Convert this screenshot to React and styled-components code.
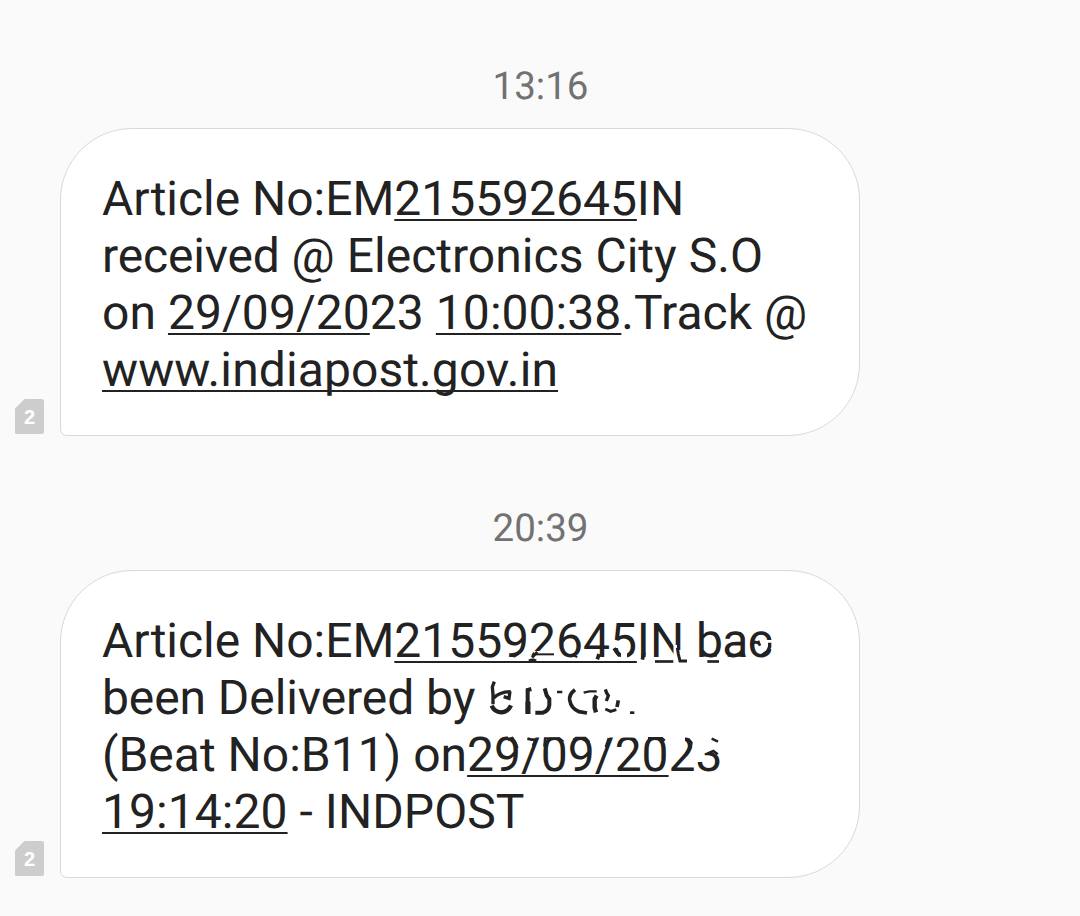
import styled, { createGlobalStyle } from "styled-components";

const GlobalStyle = createGlobalStyle`
  body {
    margin: 0;
    background: #fafafa;
  }
`;

// Sim card badge next to each incoming message
const Sim = () => (
  <SimCard>
    <svg width="29" height="35" viewBox="0 0 29 35">
      <path
        d="M9.5 0H26.5Q29 0 29 2.5V32.5Q29 35 26.5 35H1.5Q0 35 0 33.5V9.5Z"
        fill="#cdcdcd"
      />
    </svg>
    <span>2</span>
  </SimCard>
);

// Eraser strokes and what is left of the recipient name
const Smudge = () => (
  <SmudgeSvg width="300" height="150" viewBox="480 640 300 150">
    <g fill="#fff">
      <path d="M534 651h22v6h-22z" />
      <path d="M621 651h6v7h-6z" />
      <path d="M673.500 645h3.500v5h5v8h-8.500z" />
      <path d="M764 636h13v5.500h-13z" />
      <path d="M771.500 640h5v18h-5z" />
      <path d="M508 734h216v3.500h-216z" />
      <path d="M670 735h15v13l-3 6h-12z" />
      <path d="M697 735h26v18h-26z" />
    </g>
    <g fill="none" stroke="#222" transform="translate(590 615) scale(.33333)">
      <path d="M72 100L79 109L89 123" strokeWidth="11" />
      <path d="M162 112L157 134" strokeWidth="11" />
      <path d="M27 117L22 133" strokeWidth="11" />
      <path d="M195 139.500H250" strokeWidth="8" />
      <path d="M262 98L265 117L270 138H291" strokeWidth="9" />
      <path d="M352 139.500H387" strokeWidth="8" />
      <path d="M336 121H381" strokeWidth="8" />
      <path d="M414 97L424 88H462M413 122H460" strokeWidth="7" />
      <path d="M486 87L496 81L509 86M504 77L510 92" strokeWidth="8" />
      <path d="M539 83L539 95L533 109L516 121" strokeWidth="10" />
    </g>
    <g fill="none" stroke="#222" transform="translate(380 610) scale(.33333)">
      <path d="M390 136L404 139L415 131" strokeWidth="7" />
      <path d="M466 133H522" strokeWidth="6" />
      <path d="M472 126L456 142M447 153Q458 147 468 153" strokeWidth="9" />
      <path d="M580 137L592 141" strokeWidth="6" />
    </g>
    <g fill="none" stroke="#222" transform="translate(480 675) scale(.33333)">
      <path d="M43 20L37 36L39 58V88" strokeWidth="10" />
      <path d="M41 69Q58 51 92 50M90 49L87 70L71 65" strokeWidth="10" />
      <path d="M35 92Q43 111 63 112Q84 111 93 91" strokeWidth="13" />
      <path d="M154 42L143 45V117" strokeWidth="12" />
      <path d="M144 80V117" strokeWidth="15" />
      <path d="M194 40L200 61L208 72V90Q206 108 189 113H166" strokeWidth="12" />
      <path d="M231 51H247M311 53L328 49H350" strokeWidth="7" />
      <path d="M285 44Q267 57 269 75Q273 101 297 110L321 114" strokeWidth="11" />
      <path d="M350 62L344 72V98L348 112" strokeWidth="13" />
      <path d="M376 43L380 54L385 62L379 78" strokeWidth="10" />
      <path d="M415 76L411 96" strokeWidth="11" />
      <path d="M376 102L392 109L409 104" strokeWidth="9" />
      <path d="M450 113H463" strokeWidth="8" />
    </g>
    <g fill="none" stroke="#222" transform="translate(460 730) scale(.33333)">
      <path d="M143 29L157 24L166 38L172 54M202 26L215 29H226L219 48" strokeWidth="8" />
      <path d="M253 50L255 25H298L310 35M340 30L348 24H376L388 36" strokeWidth="7" />
      <path d="M447 25L438 52" strokeWidth="9" />
      <path d="M564 25H606L614 32" strokeWidth="8" />
      <path d="M684 28L693 38L690 52L680 70" strokeWidth="10" />
      <path d="M755 26L774 35M740 72L760 63L773 73" strokeWidth="8" />
    </g>
  </SmudgeSvg>
);

const App = () => {
  return (
    <Thread>
      <GlobalStyle />
      <Time>13:16</Time>
      <Message>
        <Sim />
        <Bubble>
          <Line $spacing="-0.03px">
            Article No:EM<Link>215592645</Link>IN
          </Line>
          <Line $spacing="0.03px">
            <Tight>received </Tight>@ Electronics City S.O
          </Line>
          <Line $spacing="0.05px">
            on <Link>29/09/20</Link>23 <Link>10:00:38</Link>.Track @
          </Line>
          <Line $spacing="0.1px">
            <Link>www.indiapost.gov.in</Link>
          </Line>
        </Bubble>
      </Message>
      <Time $later>20:39</Time>
      <Message>
        <Sim />
        <Bubble>
          <Line $spacing="-0.03px">
            Article No:EM<Link>215592645</Link>IN <Tight $by="-0.6px">bac</Tight>
          </Line>
          <Line $spacing="-0.08px">been Delivered by</Line>
          <Line>
            (Beat No:B11) on<Link>29/09/20</Link>23
          </Line>
          <Line $spacing="0.06px">
            <Link>19:14:20</Link> - INDPOST
          </Line>
          <Smudge />
        </Bubble>
      </Message>
    </Thread>
  );
};

// Styled components
const Thread = styled.div`
  box-sizing: border-box;
  width: 1080px;
  height: 916px;
  overflow: hidden;
  background: #fafafa;
  font-family: Roboto, sans-serif;
  text-rendering: geometricPrecision;
`;

const Time = styled.div`
  box-sizing: border-box;
  height: ${({ $later }) => ($later ? "134px" : "128px")};
  padding-top: ${({ $later }) => ($later ? "69px" : "63px")};
  padding-left: 1px;
  color: #727272;
  font-size: 38.5px;
  line-height: 48px;
  text-align: center;
`;

const Message = styled.div`
  display: flex;
  align-items: flex-end;
  gap: 16px;
  padding-left: 15px;
`;

const SimCard = styled.div`
  display: grid;
  width: 29px;
  height: 35px;
  margin-bottom: 2px;

  svg,
  span {
    grid-area: 1 / 1;
  }

  span {
    color: #fff;
    font-family: "Liberation Sans", sans-serif;
    font-size: 20px;
    font-weight: 700;
    line-height: 38px;
    text-align: center;
  }
`;

const Bubble = styled.div`
  position: relative;
  box-sizing: border-box;
  width: 800px;
  height: 308px;
  padding: 41px 0 0 41px;
  border: 1px solid #d9d9d9;
  border-radius: 72px 72px 72px 7px;
  background: #fff;
`;

const Line = styled.div`
  color: #222;
  font-size: 48px;
  line-height: 57px;
  letter-spacing: ${({ $spacing }) => $spacing || "0"};
  white-space: nowrap;
`;

const Tight = styled.span`
  letter-spacing: ${({ $by }) => $by || "-0.15px"};
`;

const Link = styled.span`
  text-decoration: underline;
  text-decoration-skip-ink: none;
  text-decoration-thickness: 2px;
  text-underline-offset: 4px;
`;

const SmudgeSvg = styled.svg`
  position: absolute;
  top: 69px;
  left: 419px;
`;

export default App;
